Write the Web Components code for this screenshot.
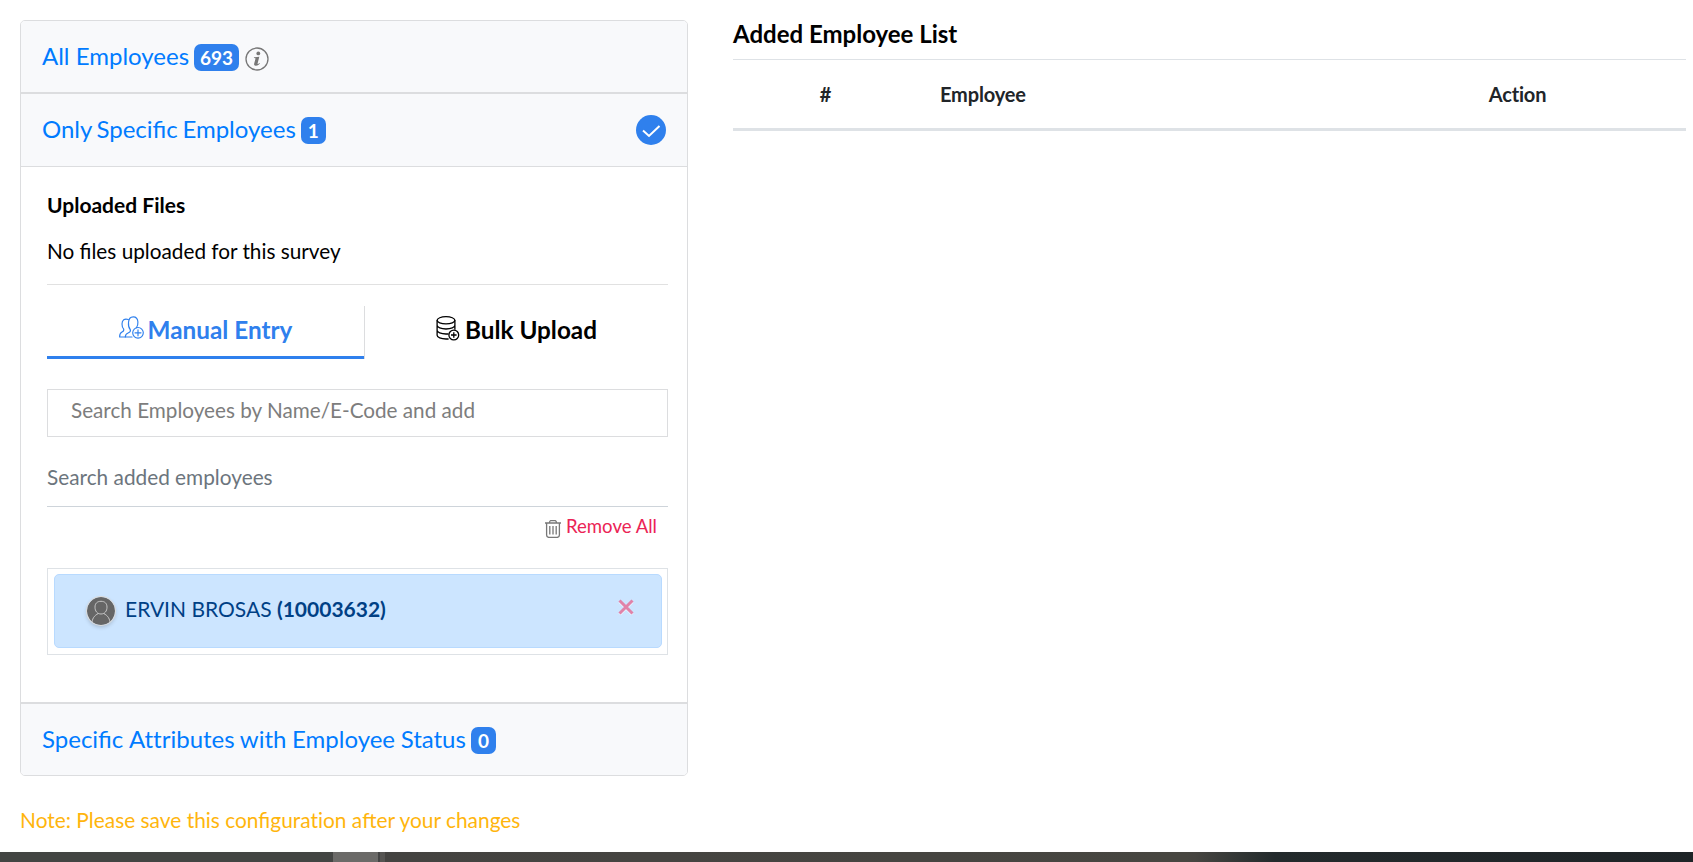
<!DOCTYPE html>
<html lang="en"><head><meta charset="utf-8"><title>Survey audience</title>
<style>
html,body{margin:0;height:100%;background:#fff;overflow:hidden}
body{font-family:Lato,"Liberation Sans",sans-serif;color:#000}
</style></head><body>
<survey-page></survey-page>
<script>
const define=(name,html)=>customElements.define(name,class extends HTMLElement{
  constructor(){super();const t=document.createElement('template');t.innerHTML=html;
    this.attachShadow({mode:'open'}).append(t.content.cloneNode(true));}
});

define('count-badge',`<style>
:host{display:inline-flex;box-sizing:border-box;height:27px;padding:0 6px;min-width:25px;justify-content:center;border-radius:7px;background:#2f80ed;color:#fff;font-weight:700;font-size:19px;line-height:28px}
</style><slot></slot>`);

define('info-icon',`<style>:host{display:block;width:24px;height:24px}svg{display:block}</style>
<svg width="24" height="24" viewBox="0 0 24 24"><circle cx="12" cy="12" r="11" fill="none" stroke="#777" stroke-width="1.3"/><circle cx="13.3" cy="6.4" r="1.9" fill="#777"/><path d="M9 10.3c1.800.1 3.400-.2 5.300-.5l-1.700 6.600c-.2.900.7.700 1.800-.3l.5.500c-1.500 1.800-3 2.400-4.300 2.200-1.500-.2-1.700-1.200-1.400-2.400l1.200-4.400c.2-.8-.3-1-1.500-1z" fill="#777"/></svg>`);

define('check-icon',`<style>:host{display:block;width:30px;height:30px}svg{display:block}</style>
<svg width="30" height="30" viewBox="0 0 30 30"><circle cx="15" cy="15" r="15" fill="#2f80ed"/><path d="M7 15.500l6 5.500L23.500 11" fill="none" stroke="#fff" stroke-width="2"/></svg>`);

define('people-icon',`<style>:host{display:block;width:25px;height:23px}svg{display:block}</style>
<svg width="25" height="23" viewBox="0 0 25 23" fill="none" stroke="#2f80ed" stroke-width="1.150" stroke-linecap="round" stroke-linejoin="round"><path d="M13 21H6.300c0-2.200.8-3.200 2.800-4 1.900-.8 2.700-1.200 2.300-3.200C9.800 12 9.200 9.500 9.500 6.500c.2-3.700 1.800-5.700 4.700-5.700s4.500 1.800 4.700 5.200c.2 2.500-.3 4.300-1.600 6"/><path d="M9.300 3.500C5.500 2.200 3 4 3 8c0 2.200.5 3.900 1.700 5.200.4 1.500-.2 2.200-1.700 2.900C1.200 17 .6 18.200.6 21h5.700"/><circle cx="19" cy="16.800" r="5.300"/><path d="M19 13.800v6M16 16.800h6"/></svg>`);

define('database-icon',`<style>:host{display:block;width:24px;height:25px}svg{display:block}</style>
<svg width="24" height="25" viewBox="0 0 24 25" fill="none" stroke="#000" stroke-width="1.300"><ellipse cx="10" cy="4.300" rx="8.900" ry="3.600"/><path d="M1.100 4.300v15c0 2 4 3.700 8.900 3.700h2.600M18.900 4.300v9.500M1.100 9.300c0 2 4 3.700 8.900 3.700s8.900-1.700 8.900-3.700M1.100 14.300c0 2 4 3.700 8.900 3.700 1 0 1.700 0 2.600-.2"/><circle cx="17.800" cy="19" r="4.900"/><path d="M17.800 16.200v5.600M15 19h5.600"/></svg>`);

define('trash-icon',`<style>:host{display:block;width:16px;height:18px}svg{display:block}</style>
<svg width="16" height="18" viewBox="0 0 16 18" fill="none" stroke="#777" stroke-width="1.300"><path d="M0 3h16M4.500 3c0-1.800.4-2.400 1.500-2.400h4c1.100 0 1.500.6 1.500 2.400M1.600 3v12c0 1.600.8 2.400 2.400 2.400h8c1.600 0 2.400-.8 2.400-2.400V3M4.800 6v8.500M8 6v8.500M11.200 6v8.500"/></svg>`);

define('user-avatar',`<style>:host{display:block;width:28px;height:28px;border-radius:50%;box-shadow:0 0 0 1px #dcdcdc,0 2px 4px #0003}svg{display:block}</style>
<svg width="28" height="28" viewBox="0 0 28 28"><defs><clipPath id="c"><circle cx="14" cy="14" r="14"/></clipPath></defs><g clip-path="url(#c)"><circle cx="14" cy="14" r="14" fill="#666"/><g fill="none" stroke="#ddd" stroke-width=".8"><path d="M14 4.300c3.900 0 6 2.200 6 5.800 0 4.100-2.300 6.900-6 6.900s-6-2.800-6-6.900c0-3.600 2.100-5.800 6-5.800z"/><path d="M4.800 28c0-6.500 2.500-9.400 6.500-11.500M23.200 28c0-6.500-2.500-9.400-6.500-11.500"/></g></g></svg>`);

define('close-icon',`<style>:host{display:block;width:16px;height:16px}svg{display:block}</style>
<svg width="16" height="16" viewBox="0 0 16 16"><path d="M1.600 2.600l12.800 12.800M14.400 2.600L1.600 15.400" stroke="#fff" stroke-width="3" opacity=".6"/><path d="M1.500 1.500l13 13M14.500 1.500l-13 13" stroke="#e083a9" stroke-width="3"/></svg>`);

define('accordion-header',`<style>
:host{display:flex;box-sizing:border-box;height:72px;align-items:center;padding:0 21px;background:#f8f9fb;border-bottom:1px solid #dcdddf;color:#007bff;font-size:24px;line-height:30px}
.t{white-space:pre;margin-right:5px;padding-bottom:2px}
::slotted(count-badge){margin-top:var(--badge-shift,2px)}
::slotted(info-icon){margin:5px 0 0 6px}
::slotted(check-icon){margin-left:auto}
</style><span class="t"><slot name="title"></slot></span><slot></slot>`);

define('entry-tab',`<style>
:host{display:flex;box-sizing:border-box;height:53px;justify-content:center;gap:5px;font-weight:700;font-size:24.3px;line-height:48px;white-space:nowrap}
:host([active]){color:#2f80ed;border-bottom:3px solid #2f80ed;gap:4px}
::slotted(*){flex:none;margin-top:10px}
</style><slot name="icon"></slot><span><slot></slot></span>`);

define('employee-row',`<style>
:host{display:flex;box-sizing:border-box;height:74px;align-items:flex-start;border:1px solid #b8daff;border-radius:5px;background:#cce5ff;color:#004085;font-size:21px;padding:0 27px 0 32px}
user-avatar{margin:22px 10px 0 0}
.n{line-height:68px;white-space:pre}
close-icon{margin:24px 0 0 auto}
</style><user-avatar></user-avatar><span class="n"><slot></slot></span><close-icon></close-icon>`);

define('audience-panel',`<style>
:host{display:block;box-sizing:border-box;width:668px;height:756px;border:1px solid #dcdddf;border-radius:5px;overflow:hidden}
accordion-header.second{border-top:1px solid #dcdddf;height:74px;word-spacing:-1.500px;--badge-shift:1px}
accordion-header.third{border-top:2px solid #dcdddf;height:73px;border-bottom:0;word-spacing:-.5px}
.plain{font-feature-settings:"liga" 0}
.body{height:535px;box-sizing:border-box;padding:0 19px 0 26px}
h4{margin:0;padding-top:22px;font-weight:700;font-size:21px;line-height:31px}
p{margin:0;padding-top:15px;font-size:20.75px;line-height:32px}
.rule{height:1px;background:#e1e1e1;margin-top:17px}
.tabs{display:grid;grid-template-columns:317px 1px 1fr;margin-top:21px}
.tabs i{background:#dcdddf}
.field{box-sizing:border-box;height:48px;margin-top:30px;border:1px solid #dcdddf;padding-left:23px;font-size:20.7px;line-height:41px;color:#7d7d7d}
.filter{box-sizing:border-box;height:48px;margin-top:22px;border-bottom:1px solid #ced4da;font-size:20.8px;line-height:36px;color:#6c757d}
.remove{display:flex;justify-content:flex-end;gap:5px;height:61px;padding-right:11px;font-size:18.600px;line-height:39px;color:#eb2355}
trash-icon{margin-top:13px}
.list{box-sizing:border-box;height:87px;border:1px solid #dee2e6;padding:5px 5px 5px 6px}
</style>
<accordion-header class="first"><span slot="title">All Employees</span><count-badge>693</count-badge><info-icon></info-icon></accordion-header>
<accordion-header class="second"><span slot="title">Only Specific Employees</span><count-badge>1</count-badge><check-icon></check-icon></accordion-header>
<div class="body"><h4>Uploaded Files</h4><p>No files uploaded for this survey</p><div class="rule"></div>
<div class="tabs"><entry-tab active><people-icon slot="icon"></people-icon>Manual Entry</entry-tab><i></i><entry-tab><database-icon slot="icon"></database-icon>Bulk Upload</entry-tab></div>
<div class="field">Search Employees by Name/E-Code and add</div>
<div class="filter">Search added employees</div>
<div class="remove"><trash-icon></trash-icon><span>Remove All</span></div>
<div class="list"><employee-row>ERVIN BROSAS <b>(10003632)</b></employee-row></div></div>
<accordion-header class="third"><span slot="title">Specific <span class="plain">Attributes</span> with Employee Status</span><count-badge>0</count-badge></accordion-header>`);

define('added-list',`<style>
:host{display:block;width:953px}
h3{margin:0;height:39px;border-bottom:1px solid #dee2e6;font-size:24px;line-height:27px;font-weight:700}
.head{display:grid;grid-template-columns:185px 431px 1fr;height:68px;border-bottom:3px solid #dee2e6;color:#212529;font-size:20px;letter-spacing:-.17px;line-height:68px;font-weight:700;text-align:center}
.head span:nth-child(2){text-align:left;padding-left:22px}
</style><h3>Added Employee List</h3><div class="head"><span>#</span><span>Employee</span><span>Action</span></div>`);

define('desk-strip',`<style>:host{display:grid;grid-template-columns:333px 45px 2px 5px 1fr;height:10px}
.a{background:#434543}.b{background:#6b6a68}.c{background:#444}.d{background:#555452}
.e{background:linear-gradient(90deg,#444341,#474641 800px,#464541 810px,#232a2c 890px,#1e2427)}</style><i class="a"></i><i class="b"></i><i class="c"></i><i class="d"></i><i class="e"></i>`);

define('survey-page',`<style>
:host{display:flex;flex-direction:column;height:862px}
main{display:flex;flex:1;gap:45px;padding:20px 0 0 20px}
.note{margin-top:28px;font-size:20.900px;line-height:32px;color:#ffb50d}
.plain{font-feature-settings:"liga" 0}
</style><main><div><audience-panel></audience-panel><div class="note">Note: Please save this confi<span class="plain">guration a</span>fter your changes</div></div><added-list></added-list></main><desk-strip></desk-strip>`);
</script></body></html>
